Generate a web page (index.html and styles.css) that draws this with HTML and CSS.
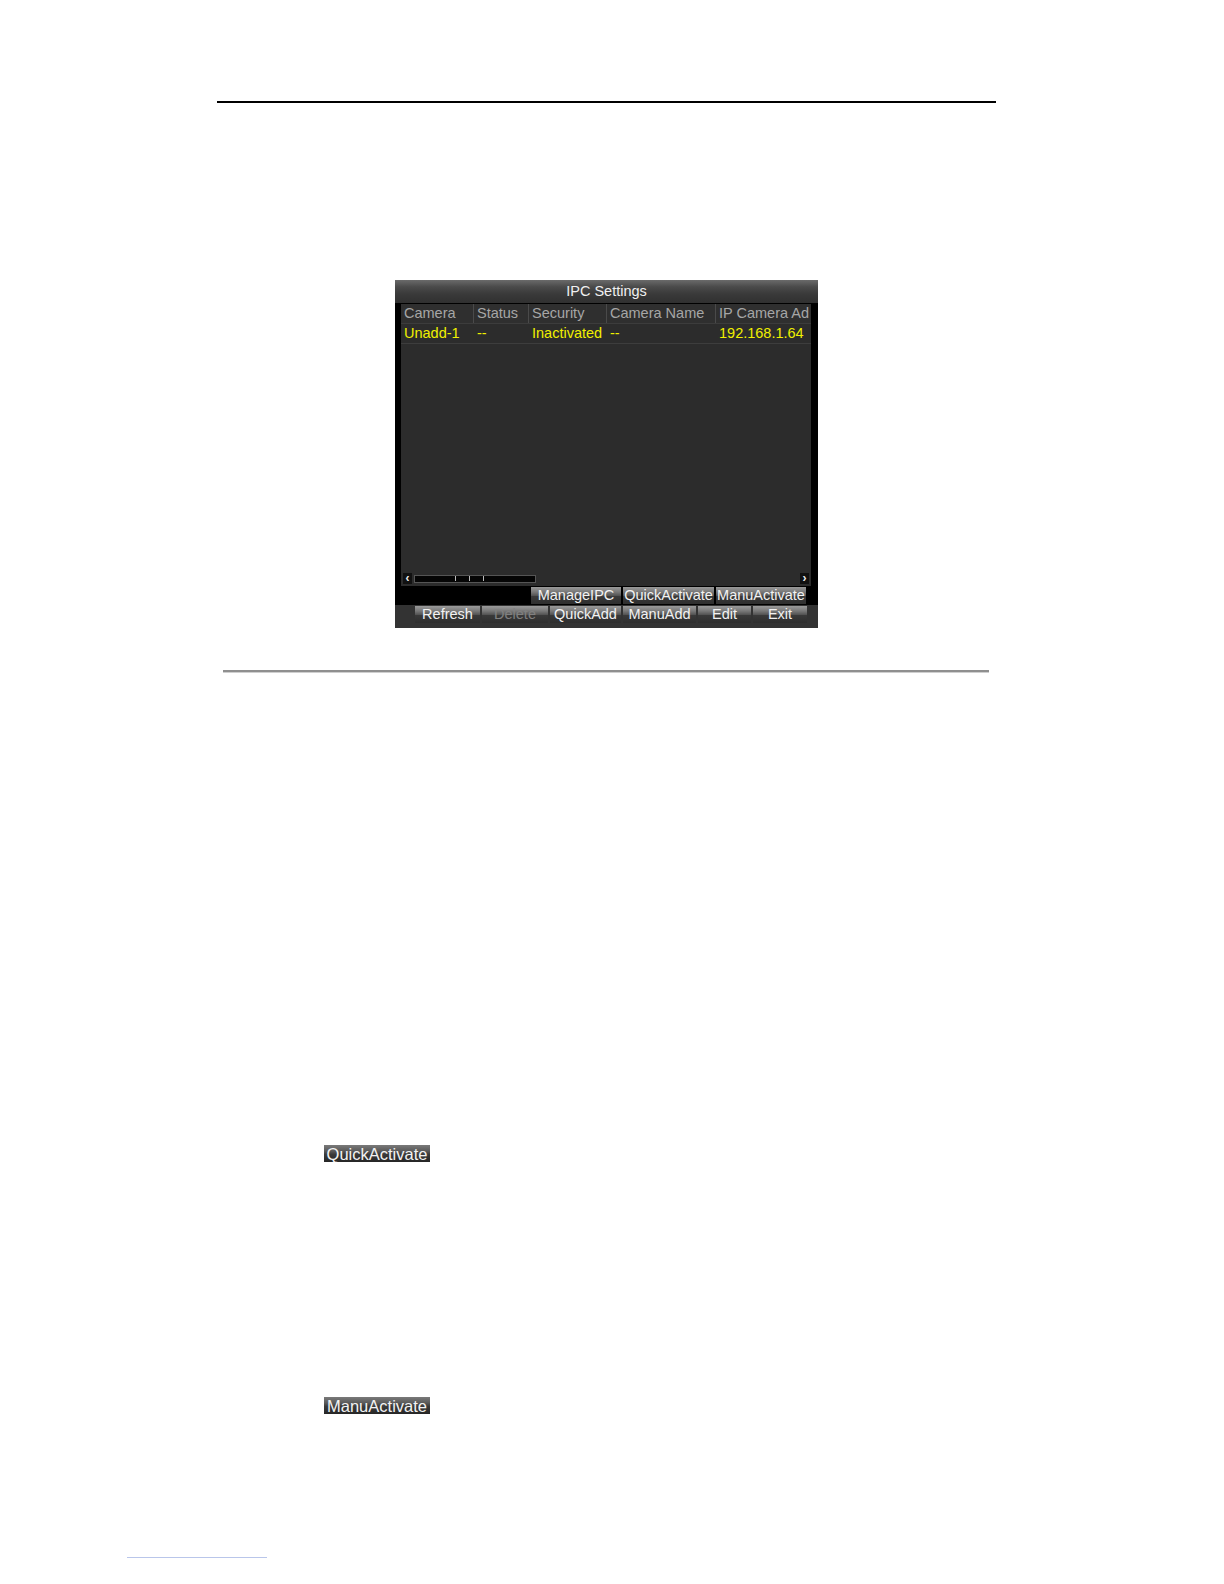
FILE: index.html
```html
<!DOCTYPE html>
<html>
<head>
<meta charset="utf-8">
<title>IPC Settings</title>
<link rel="stylesheet" href="styles.css">
</head>
<body>
<div class="page">
  <div class="rule-top"></div>

  <div class="dialog">
    <div class="titlebar">IPC Settings</div>
    <div class="panel">
      <div class="list">
        <div class="grid head">
          <div class="cell">Camera</div>
          <div class="cell">Status</div>
          <div class="cell">Security</div>
          <div class="cell">Camera Name</div>
          <div class="cell">IP Camera Ad</div>
        </div>
        <div class="grid data">
          <div class="cell">Unadd-1</div>
          <div class="cell">--</div>
          <div class="cell">Inactivated</div>
          <div class="cell">--</div>
          <div class="cell">192.168.1.64</div>
        </div>
        <div class="list-space"></div>
        <div class="scroll">
          <span class="arrow">&#8249;</span>
          <span class="track"><i></i><i></i><i></i></span>
          <span class="scroll-fill"></span>
          <span class="arrow">&#8250;</span>
        </div>
      </div>
      <div class="row1">
        <span class="btn w90">ManageIPC</span>
        <span class="btn w91">QuickActivate</span>
        <span class="btn w90">ManuActivate</span>
      </div>
    </div>
    <div class="row2">
      <span class="btn w65">Refresh</span>
      <span class="btn w66 disabled">Delete</span>
      <span class="btn w71">QuickAdd</span>
      <span class="btn w73">ManuAdd</span>
      <span class="btn w53">Edit</span>
      <span class="btn w54">Exit</span>
    </div>
  </div>

  <div class="rule-mid"></div>

  <div class="inline-btn first"><span class="btn solo">QuickActivate</span></div>
  <div class="inline-btn second"><span class="btn solo">ManuActivate</span></div>

  <div class="footer-link"></div>
</div>
</body>
</html>
```

FILE: styles.css
```css
html, body {
  margin: 0;
  padding: 0;
  background: #ffffff;
}

.page {
  width: 1224px;
  height: 1584px;
  overflow: hidden;
  font-family: "Liberation Sans", Arial, sans-serif;
}

.rule-top {
  margin: 101px 0 0 217px;
  width: 779px;
  height: 2px;
  background: #000;
}

.dialog {
  margin: 177px 0 0 395px;
  width: 423px;
  height: 348px;
  background: #333333;
  display: flex;
  flex-direction: column;
  font-size: 14.5px;
}

.titlebar {
  height: 23px;
  line-height: 23px;
  text-align: center;
  color: #f0f0f0;
  background: linear-gradient(to bottom, #6a6a6a 0%, #4a4a4a 30%, #3a3a3a 60%, #303030 100%);
}

.panel {
  background: #000;
  padding: 1px 7px 0 6px;
  display: flex;
  flex-direction: column;
}

.list {
  height: 282px;
  background: #2c2c2c;
  display: flex;
  flex-direction: column;
}

.grid {
  display: grid;
  grid-template-columns: 72px 55px 78px 109px 1fr;
  height: 19px;
  line-height: 19px;
}

.grid .cell {
  padding-left: 3px;
  white-space: nowrap;
  overflow: hidden;
}

.head {
  background: #2f2f2f;
  color: #a6a6a6;
  border-bottom: 1px solid #3c3c3c;
}

.head .cell + .cell {
  border-left: 1px solid #4a4a4a;
}

.data {
  color: #f0f000;
  border-bottom: 1px solid #3d3d3d;
}

.data .cell + .cell {
  border-left: 1px solid transparent;
}

.list-space {
  flex: 1;
}

.scroll {
  height: 11px;
  margin: 0 2px 2px 2px;
  display: flex;
  align-items: center;
}

.arrow {
  width: 9px;
  height: 11px;
  background: #111;
  color: #eee;
  font-size: 12px;
  font-weight: bold;
  line-height: 10px;
  text-align: center;
}

.track {
  margin-left: 2px;
  width: 122px;
  height: 8px;
  background: #050505;
  border: 1px solid #555;
  display: flex;
  gap: 13px;
  padding-left: 40px;
  box-sizing: border-box;
  align-items: center;
}

.track i {
  display: block;
  width: 1px;
  height: 5px;
  background: #bbb;
}

.scroll-fill {
  flex: 1;
}

.row1 {
  height: 19px;
  display: flex;
  justify-content: flex-end;
  align-items: center;
  gap: 2px;
  padding-right: 5px;
}

.row2 {
  height: 24px;
  display: flex;
  align-items: flex-start;
  padding: 1px 0 0 20px;
  gap: 2px;
}

.btn {
  display: inline-block;
  height: 17px;
  line-height: 17px;
  text-align: center;
  color: #f2f2f2;
  white-space: nowrap;
  background: linear-gradient(to bottom, #9a9a9a 0%, #777 30%, #555 50%, #3a3a3a 52%, #2e2e2e 100%);
}

.btn.disabled {
  color: #808080;
}

.w90 { width: 90px; }
.w91 { width: 91px; }
.w65 { width: 65px; }
.w66 { width: 66px; }
.w71 { width: 71px; }
.w73 { width: 73px; }
.w53 { width: 53px; }
.w54 { width: 54px; }

.rule-mid {
  margin: 42px 0 0 223px;
  width: 766px;
  height: 3px;
  background: linear-gradient(to bottom, #8f8f8f 0%, #8f8f8f 66%, #cfcfcf 66%, #cfcfcf 100%);
}

.inline-btn {
  margin-left: 324px;
  height: 17px;
  display: flex;
}

.inline-btn.first {
  margin-top: 472px;
}

.inline-btn.second {
  margin-top: 235px;
}

.btn.solo {
  width: 106px;
  font-size: 16.5px;
  line-height: 18px;
  overflow: hidden;
  background: linear-gradient(to bottom, #7a7a7a 0%, #5a5a5a 35%, #3a3a3a 55%, #262626 100%);
}

.footer-link {
  margin: 143px 0 0 127px;
  width: 140px;
  height: 1px;
  background: #b9c6ea;
}
```
